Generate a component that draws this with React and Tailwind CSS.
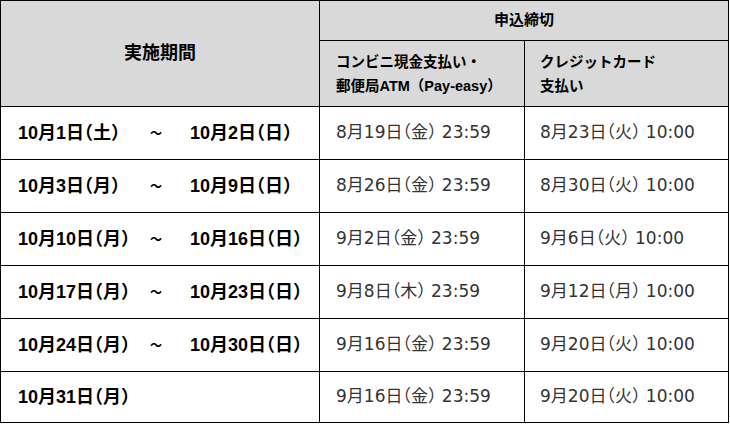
import React from "react";

const rows = [
  { s: "10月1日（土）", e: "10月2日（日）", a: "8月19日（金） 23:59", b: "8月23日（火） 10:00" },
  { s: "10月3日（月）", e: "10月9日（日）", a: "8月26日（金） 23:59", b: "8月30日（火） 10:00" },
  { s: "10月10日（月）", e: "10月16日（日）", a: "9月2日（金） 23:59", b: "9月6日（火） 10:00" },
  { s: "10月17日（月）", e: "10月23日（日）", a: "9月8日（木） 23:59", b: "9月12日（月） 10:00" },
  { s: "10月24日（月）", e: "10月30日（日）", a: "9月16日（金） 23:59", b: "9月20日（火） 10:00" },
  { s: "10月31日（月）", e: null, a: "9月16日（金） 23:59", b: "9月20日（火） 10:00" },
];

export default function App() {
  const bodyFont = { fontFamily: '"DejaVu Sans", "Noto Sans CJK JP", sans-serif' };
  const boldFont = { fontFamily: '"Liberation Sans", "Noto Sans CJK JP", sans-serif' };
  return (
    <div className="bg-white w-[730px] h-[425px]">
      <div
        className="w-[729px] border border-black grid grid-cols-[319px_205px_203px] grid-rows-[40px_66px_53px_53px_53px_53px_53px_50px] text-black"
        style={boldFont}
      >
        <div className="row-span-2 bg-[#d9d9d9] border-r border-b border-black flex items-center justify-center font-bold text-[18px]">
          実施期間
        </div>
        <div className="col-span-2 bg-[#d9d9d9] border-b border-black flex items-center justify-center font-bold text-[15px]">
          申込締切
        </div>
        <div className="bg-[#d9d9d9] border-r border-b border-black flex flex-col justify-center pl-[16px] font-bold text-[14.5px] leading-[24px] whitespace-nowrap">
          <span>コンビニ現金支払い・</span>
          <span>郵便局ATM（Pay-easy）</span>
        </div>
        <div className="bg-[#d9d9d9] border-b border-black flex flex-col justify-center pl-[15px] font-bold text-[14.5px] leading-[24px]">
          <span>クレジットカード</span>
          <span>支払い</span>
        </div>
        {rows.map((r, i) => {
          const last = i === rows.length - 1;
          return (
            <React.Fragment key={i}>
              <div
                className={`border-r border-black flex items-center pl-[17px] font-bold text-[18px] [font-feature-settings:'halt'] ${last ? "" : "border-b"}`}
              >
                <span className="w-[128px] whitespace-nowrap">{r.s}</span>
                {r.e && (
                  <>
                    <span className="w-[20px] text-center text-[12px]" style={{ fontFamily: '"Noto Sans CJK JP", sans-serif' }}>～</span>
                    <span className="ml-[24px] whitespace-nowrap">{r.e}</span>
                  </>
                )}
              </div>
              <div
                className={`border-r border-black flex items-center pl-[16px] text-[17px] text-[#333333] whitespace-nowrap [font-feature-settings:'halt'] ${last ? "" : "border-b"}`}
                style={bodyFont}
              >
                {r.a}
              </div>
              <div
                className={`border-black flex items-center pl-[15px] text-[17px] text-[#333333] whitespace-nowrap [font-feature-settings:'halt'] ${last ? "" : "border-b"}`}
                style={bodyFont}
              >
                {r.b}
              </div>
            </React.Fragment>
          );
        })}
      </div>
    </div>
  );
}
